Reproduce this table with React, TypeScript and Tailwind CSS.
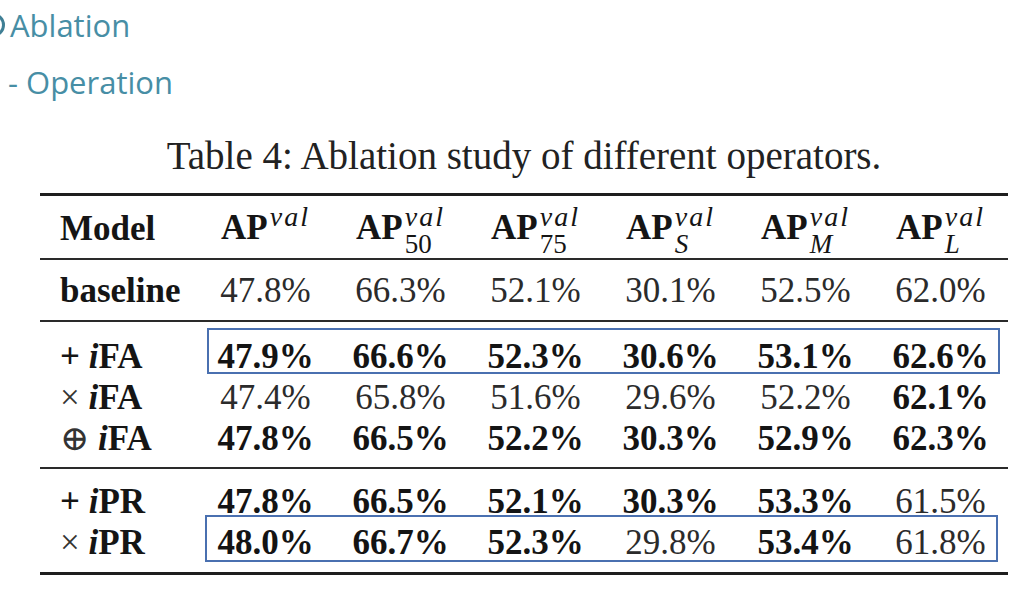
const serif = { fontFamily: '"Liberation Serif", "DejaVu Serif", serif' };

type Cell = { v: string; b?: boolean };

function Head({ sub, italicSub }: { sub?: string; italicSub?: boolean }) {
  return (
    <span className="inline-flex items-start text-[#151515]">
      <span className="text-[35px] font-bold leading-[35px]">AP</span>
      <span className="-mt-[7px] ml-[2px] flex h-[28px] flex-col items-start">
        <span className="text-[28px] italic leading-[28px] tracking-[2px]">val</span>
        {sub && (
          <span className={(italicSub ? 'italic ' : '') + 'text-[27px] leading-[26px]'}>{sub}</span>
        )}
      </span>
    </span>
  );
}

function Row({ label, cells, box }: { label: React.ReactNode; cells: Cell[]; box?: 'a' | 'b' }) {
  return (
    <div className="relative grid h-[41px] grid-cols-[158px_repeat(6,135px)] items-center text-[35px] leading-[41px]">
      <div className="pl-[20px] text-[#151515]">{label}</div>
      {cells.map((c, i) => (
        <div key={i} className={c.b ? 'text-center font-bold text-[#141414]' : 'text-center text-[#2b2b2b]'}>
          {c.v}
        </div>
      ))}
      {box === 'a' && <div className="absolute -top-[8px] left-[167px] h-[46px] w-[793px] border-2 border-[#4a70b0]" />}
      {box === 'b' && <div className="absolute -top-[7px] left-[165px] h-[47px] w-[793px] border-2 border-[#4a70b0]" />}
    </div>
  );
}

const c = (v: string, b = false): Cell => ({ v, b });

export default function App() {
  return (
    <div className="h-[601px] w-[1024px] overflow-hidden bg-white">
      <div className="flex h-[50px] items-center text-[31px] text-[#478ea5]" style={{ fontFamily: '"Open Sans", sans-serif' }}>
        <div className="-ml-[19px] mr-[5px] h-[24px] w-[24px] rounded-full border-[3px] border-[#3f7f95]" />
        <span>Ablation</span>
      </div>
      <div className="flex h-[64px] items-center pl-[8px] text-[31px] text-[#478ea5]" style={{ fontFamily: '"Open Sans", sans-serif' }}>
        <span>- Operation</span>
      </div>

      <div style={serif}>
        <div className="mt-[20px] mb-[15px] w-[1048px] text-center text-[39px] leading-[44px] text-[#222]">
          Table 4: Ablation study of different operators.
        </div>

        <div className="ml-[40px] w-[968px]">
          <div className="h-[3px] bg-[#1e1e1e]" />
          <div className="grid h-[62px] grid-cols-[158px_repeat(6,135px)] items-center pt-[2px]">
            <div className="pl-[20px] text-[35px] font-bold leading-[35px] text-[#151515]">Model</div>
            <div className="text-center"><Head /></div>
            <div className="text-center"><Head sub="50" /></div>
            <div className="text-center"><Head sub="75" /></div>
            <div className="text-center"><Head sub="S" italicSub /></div>
            <div className="text-center"><Head sub="M" italicSub /></div>
            <div className="text-center"><Head sub="L" italicSub /></div>
          </div>
          <div className="h-[2px] bg-[#2a2a2a]" />
          <div className="grid h-[60px] grid-cols-[158px_repeat(6,135px)] items-center pt-[3px] text-[35px]">
            <div className="pl-[20px] font-bold text-[#151515]">baseline</div>
            {['47.8%', '66.3%', '52.1%', '30.1%', '52.5%', '62.0%'].map((v) => (
              <div key={v} className="text-center text-[#2b2b2b]">{v}</div>
            ))}
          </div>
          <div className="h-[2px] bg-[#2a2a2a]" />
          <div className="pt-[14px] pb-[8px]">
            <Row
              box="a"
              label={<span className="font-bold">+ <i>i</i>FA</span>}
              cells={[c('47.9%', true), c('66.6%', true), c('52.3%', true), c('30.6%', true), c('53.1%', true), c('62.6%', true)]}
            />
            <Row
              label={<span><span className="text-[#333]">×</span> <b><i>i</i>FA</b></span>}
              cells={[c('47.4%'), c('65.8%'), c('51.6%'), c('29.6%'), c('52.2%'), c('62.1%', true)]}
            />
            <Row
              label={<span><span className="text-[#333]">⊕</span> <b><i>i</i>FA</b></span>}
              cells={[c('47.8%', true), c('66.5%', true), c('52.2%', true), c('30.3%', true), c('52.9%', true), c('62.3%', true)]}
            />
          </div>
          <div className="h-[2px] bg-[#2a2a2a]" />
          <div className="pt-[12px] pb-[9px]">
            <Row
              label={<span className="font-bold">+ <i>i</i>PR</span>}
              cells={[c('47.8%', true), c('66.5%', true), c('52.1%', true), c('30.3%', true), c('53.3%', true), c('61.5%')]}
            />
            <Row
              box="b"
              label={<span><span className="text-[#333]">×</span> <b><i>i</i>PR</b></span>}
              cells={[c('48.0%', true), c('66.7%', true), c('52.3%', true), c('29.8%'), c('53.4%', true), c('61.8%')]}
            />
          </div>
          <div className="h-[3px] bg-[#1e1e1e]" />
        </div>
      </div>
    </div>
  );
}
